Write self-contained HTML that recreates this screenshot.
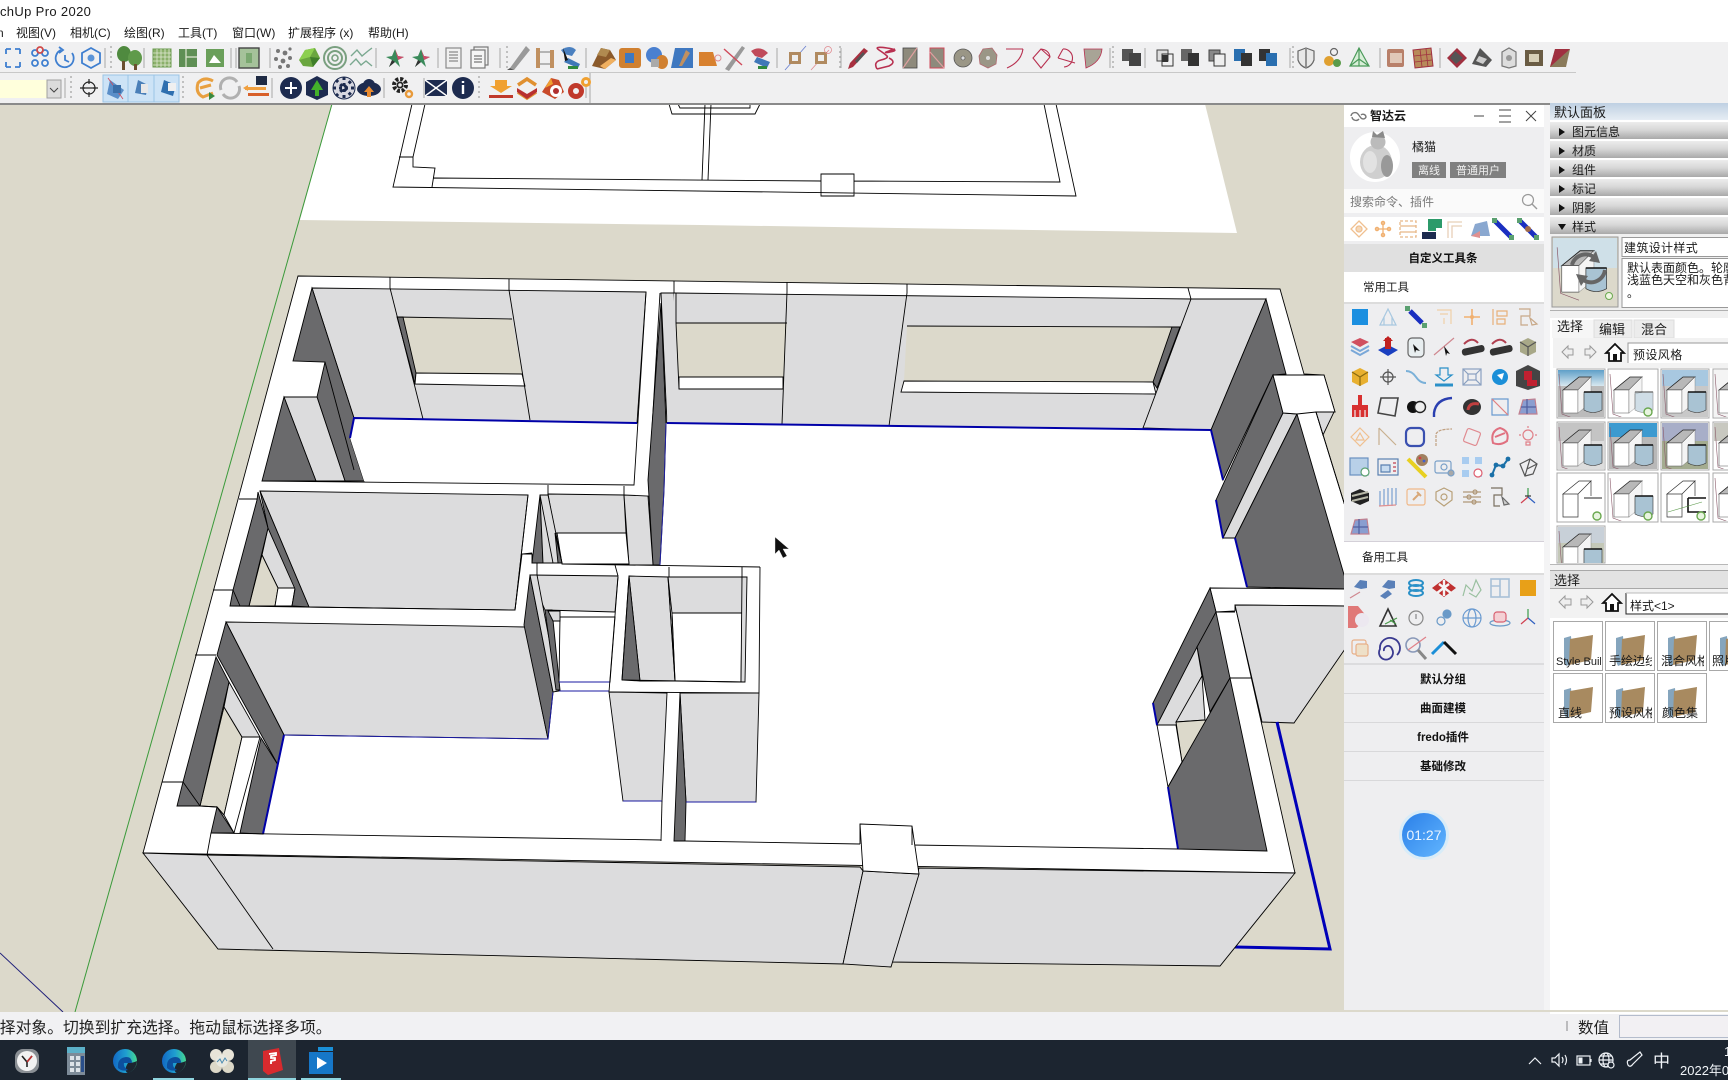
<!DOCTYPE html>
<html><head><meta charset="utf-8"><style>
html,body{margin:0;padding:0;width:1728px;height:1080px;overflow:hidden;background:#dcd9cb}
svg{display:block}
text{font-family:"Liberation Sans","Noto Sans CJK SC",sans-serif;fill:#1a1a1a}
.g{fill:#dcdcdd;stroke:#000;stroke-width:.9}
.d{fill:#6a6a6c;stroke:#000;stroke-width:.9}
.w{fill:#fff;stroke:#000;stroke-width:.9}
.y{fill:#dcd9cb;stroke:#000;stroke-width:.9}
.yn{fill:#dcd9cb;stroke:none}
.l{fill:none;stroke:#000;stroke-width:.9}
.bl{fill:none;stroke:#0000a8;stroke-width:2}
.s{fill:none;stroke-width:1.4}
.t12{font-size:12px}.t13{font-size:13px}
.b{font-weight:bold;font-size:11.5px;text-anchor:middle;fill:#111}
.sep{stroke:#a8a8a8;stroke-width:1}
.dots{stroke:#b0b0b0;stroke-width:1.5;stroke-dasharray:2 3}
</style></head><body>
<svg width="1728" height="1080" viewBox="0 0 1728 1080" xmlns="http://www.w3.org/2000/svg">
<defs>
<linearGradient id="hd" x1="0" y1="0" x2="0" y2="1"><stop offset="0" stop-color="#ececec"/><stop offset=".45" stop-color="#d8d8d8"/><stop offset="1" stop-color="#a9a9a9"/></linearGradient>
<linearGradient id="hb" x1="0" y1="0" x2="0" y2="1"><stop offset="0" stop-color="#bfd0e2"/><stop offset="1" stop-color="#e6edf4"/></linearGradient>
<linearGradient id="cl" x1="0" y1="0" x2="1" y2="1"><stop offset="0" stop-color="#2a7fe8"/><stop offset="1" stop-color="#62b6ff"/></linearGradient>
<linearGradient id="sk" x1="0" y1="0" x2="0" y2="1"><stop offset="0" stop-color="#5f9fc8"/><stop offset="1" stop-color="#d8e8f0"/></linearGradient>
<linearGradient id="ed" x1="0" y1="0" x2="1" y2="0"><stop offset="0" stop-color="#1268c4"/><stop offset=".55" stop-color="#1f9fd0"/><stop offset="1" stop-color="#45d890"/></linearGradient>
<g id="bx"><path d="M5 18 21 5H33L20 18Z" fill="#b8b8b8" stroke="#222" stroke-width=".8"/><path d="M5 18H20V41H5Z" fill="#fff" stroke="#555" stroke-width=".6"/><path d="M20 18 33 5V20L26 22V36L20 41Z" fill="#f4f4f4" stroke="#777" stroke-width=".4"/><path d="M1 2 4 42 20 48" fill="none" stroke="#8a5a6a" stroke-width=".6"/></g>
<g id="cy"><path d="M26 20H44V38Q35 43 26 38Z" fill="#a9c3d3" stroke="#333" stroke-width=".6"/><path d="M26 20H44" stroke="#111" stroke-width="1.4"/></g>
<g id="ck"><circle cx="39" cy="42" r="4" fill="#e8f4e0" stroke="#6aa84f" stroke-width="1.4"/></g>
<g id="fd"><path d="M11 7 18 5 20 32 13 35 11 30Z" fill="#85a5bd"/><path d="M17 8 40 4 38 29 16 34Z" fill="#a88a60"/></g>
</defs>

<rect width="1728" height="1080" fill="#dcd9cb"/>

<!-- upper plan sheet -->
<polygon points="332,104 1205,104 1237,233 700,225 300,220" fill="#fff"/>
<path class="l" d="M412,104 393,187 1076,196 1056,104M425,104 413,157 399,157M413,157 413,167 435,168 432,187M433,178 821,181M854,181 1060,182 1044,104M705,104 702,180M711,104 708,180M821,174H854V196H821ZM669,104 672,114H755L760,104M678,104 680,108H750V104"/>

<!-- axes -->
<path d="M332,104 75,1012" stroke="#3a9a3a" stroke-width="1" fill="none"/>
<path d="M0,953 63,1012" stroke="#20207a" stroke-width="1" fill="none"/>

<!-- footprint -->
<polygon class="w" points="298,276 1280,289 1304,374 1324,375 1335,412 1316,412 1345,506 1345,606 1235,605 1295,873 143,853"/>
<path class="l" d="M1188,288 1191,299M239,499H257M213,590H233M195,655H216M162,782H183M390,277 390,288M509,279 509,290M674,281 674,293M787,282 787,292M907,284 907,293"/>

<!-- back wall room 1 -->
<polygon class="g" points="312,288 646,292 637,423 354,418"/>
<polygon class="yn" points="403,317 512,319 522,374 416,373" />
<polygon class="d" points="397,317 403,317 416,373 415,384"/>
<polygon class="w" points="416,373 522,374 525,386 415,384"/>
<path class="l" d="M390,288 423,419M397,317H403M512,319 397,317M509,290 530,420"/>
<polygon class="d" points="312,288 293,361 325,362 317,397 345,481 364,481 350,438 354,418"/>
<polygon class="g" points="284,397 317,397 345,481 316,481"/>
<polygon class="d" points="284,397 316,481 262,481"/>
<path class="l" d="M325,362 354,470"/>
<polygon fill="#fff" stroke="none" points="354,419 637,424 634,485 364,481 350,438"/>
<path class="l" d="M262,481 634,485 646,292M660,293 649,480"/>
<path class="bl" d="M350,438 354,418 637,423"/>

<!-- dark sliver -->
<polygon class="g" points="661,293 674,293 678,423 667,423"/>
<polygon class="d" points="661,303 648,480 653,565 660,565 664,490 666,423"/>
<path d="M664,490 666,423 M660,565 664,490" stroke="#2020a0" stroke-width="1" fill="none"/>

<!-- back wall main room -->
<polygon fill="#dcdcdd" stroke="none" points="674,293 1191,299 1143,428 667,423"/>
<path class="l" d="M674,293 1191,299"/>
<polygon class="yn" points="676,323 787,323 783,377 679,377"/>
<polygon class="w" points="679,377 783,377 783,389 679,389"/>
<polygon class="yn" points="907,326 1172,327 1153,382 904,381"/>
<polygon class="d" points="1172,327 1180,327 1157,388 1153,382"/>
<polygon class="w" points="904,381 1153,382 1156,394 901,392"/>
<path class="l" d="M676,293 676,323 679,389M787,292 782,424M907,293 889,426M676,323 787,323M907,326 1172,327"/>
<polygon class="g" points="1191,299 1266,299 1211,430 1143,428"/>
<path class="bl" d="M667,423 1211,430"/>

<!-- right walls upper -->
<polygon class="d" points="1266,299 1286,374 1273,375 1223,480 1211,430"/>
<polygon class="d" points="1273,375 1283,413 1223,538 1216,500"/>
<polygon class="g" points="1297,414 1283,413 1223,538 1235,538"/>
<polygon class="d" points="1297,414 1345,578 1345,589 1247,587 1235,538"/>
<polygon class="w" points="1273,375 1324,375 1335,412 1316,412 1297,414 1283,413"/>
<polygon class="g" points="1316,412 1334,412 1323,435"/>
<path class="bl" d="M1211,430 1223,480M1216,500 1223,538M1235,538 1247,587"/>
<path class="l" d="M1316,412 1345,506"/>

<!-- right walls lower -->
<polygon class="w" points="1210,588 1345,589 1345,606 1235,605 1235,611 1216,612"/>
<polygon class="g" points="1235,605 1345,606 1345,649 1294,723 1262,722"/>
<polygon class="d" points="1210,588 1216,612 1157,725 1153,703"/>
<polygon class="d" points="1216,612 1230,678 1210,712 1197,647"/>
<polygon class="g" points="1197,647 1157,725 1176,725 1202,676"/>
<polygon class="g" points="1202,676 1176,722 1205,720"/>
<polygon class="y" points="1176,722 1205,720 1212,724 1182,762"/>
<polygon class="w" points="1157,725 1176,725 1182,762 1168,787"/>
<polygon class="d" points="1230,678 1267,851 1178,849 1168,787"/>
<path class="l" d="M1230,678H1252M1216,612H1235"/>
<path d="M1277,722 1330,949 1235,947" fill="none" stroke="#0000b8" stroke-width="3"/>
<path class="bl" d="M1168,787 1178,849M1153,703 1157,725"/>

<!-- left room 2 -->
<polygon class="g" points="260,491 528,495 515,610 309,607"/>
<polygon class="g" points="268,528 295,588 278,588 262,555"/>
<polygon class="y" points="262,555 278,588 275,606 249,606"/>
<polygon class="w" points="278,588 295,588 292,606 275,606"/>
<polygon class="d" points="258,492 257,500 233,590 230,606 249,606 268,528"/>
<polygon class="d" points="260,491 309,607 292,606 295,589 268,528"/>
<path class="l" d="M233,590 240,606"/>
<path class="l" d="M230,606 515,610 528,495"/>

<!-- left room 3 -->
<polygon class="g" points="226,622 525,627 548,739 284,735"/>
<polygon class="d" points="226,622 284,735 278,765 217,655"/>
<polygon class="y" points="224,707 242,737 224,815 217,807 200,806"/>
<polygon class="g" points="229,682 260,737 242,737 224,707"/>
<polygon class="w" points="242,737 260,737 234,833 224,815"/>
<polygon class="d" points="216,657 183,782 177,806 200,806 229,682"/>
<polygon class="d" points="261,738 278,765 263,834 240,833"/>
<polygon class="d" points="217,807 234,833 211,833"/>
<path class="l" d="M183,782 200,806M224,815 217,807 200,806"/>
<polygon class="d" points="530,575 524,625 548,739 553,692"/>
<path class="bl" d="M284,735 263,834"/>
<path d="M284,735 548,739 553,692" fill="none" stroke="#1818a0" stroke-width="1"/>

<!-- central junction -->
<polygon class="g" points="548,494 624,495 626,533 555,533"/>
<polygon class="g" points="624,495 648,496 653,565 629,565"/>
<polygon fill="#fff" stroke="#000" stroke-width=".9" points="557,533 626,533 629,564 562,564"/>
<polygon class="d" points="540,495 532,563 543,563"/>
<polygon class="g" points="540,495 548,495 562,563 543,563"/>
<polygon class="d" points="555,533 562,563 558,563"/>
<path class="l" d="M540,495 553,563M548,485V495M624,486V496M532,553 522,554 515,610M522,554H532V563H562M562,564 760,567"/>
<path class="l" d="M537,563V575M615,565 618,576M669,567V577M742,567V577M760,567 759,693"/>
<polygon class="g" points="530,575 618,576 615,612 545,610"/>
<polygon class="g" points="537,575 559,691 553,692 530,575"/>
<polygon class="d" points="545,610 552,610 560,690 556,690"/>
<polygon fill="#fff" stroke="#000" stroke-width=".9" points="560,617 615,617 610,682 559,682"/>
<polygon class="g" points="548,611 560,611 560,621 553,621"/>
<path d="M559,682H610M559,691H609" stroke="#1818a0" stroke-width="1" fill="none"/>
<polygon class="g" points="629,576 668,577 675,681 640,681"/>
<polygon class="d" points="629,576 622,680 640,681"/>
<polygon class="g" points="668,577 742,577 742,613 672,613"/>
<polygon fill="#fff" stroke="#000" stroke-width=".9" points="672,613 742,613 741,682 675,681"/>
<polygon class="g" points="742,577 747,577 745,682 741,682"/>
<path class="l" d="M622,680 745,682M672,613 675,681M668,577 675,681"/>
<path class="l" d="M618,577 609,692 759,693M629,576 622,680"/>
<polygon class="g" points="609,692 667,693 662,801 623,801"/>
<polygon class="g" points="680,693 759,693 756,802 686,802"/>
<polygon class="d" points="680,693 674,841 685,841 686,802"/>
<path d="M623,801H662M686,802H756" stroke="#1818a0" stroke-width="1" fill="none"/>
<path class="l" d="M662,801 661,841"/>

<!-- front wall -->
<path class="l" d="M211,833 661,840M685,841 860,844M912,845 1178,849"/>
<polygon class="g" points="143,853 207,855 860,867 863,871 843,964 218,949"/>
<path class="l" d="M207,855 273,949"/>
<polygon class="g" points="919,868 1295,873 1220,966 891,962"/>
<polygon class="g" points="863,871 919,874 891,967 843,964"/>
<polygon class="w" points="860,824 912,826 919,874 863,871"/>
<path class="l" d="M211,833 207,855M860,824 860,844M912,826 912,845"/>

<!-- cursor -->
<path d="M775,537 775,554 779,550 783,558 787,556 783,549 789,549Z" fill="#111" stroke="#eee" stroke-width=".4"/>

<!-- top chrome -->
<rect x="0" y="0" width="1728" height="42" fill="#fff"/>
<rect x="0" y="42" width="1728" height="61" fill="#f0f0f1"/>
<rect x="0" y="72" width="1576" height="1" fill="#c8c8c8"/>
<rect x="0" y="103" width="1728" height="2" fill="#8a8a8a"/>
<text x="-4" y="16" style="font-size:13px;letter-spacing:.35px">tchUp Pro 2020</text>
<g style="font-size:12px">
<text x="-3" y="37">n</text>
<text x="16" y="37">视图(V)</text><text x="70" y="37">相机(C)</text><text x="124" y="37">绘图(R)</text><text x="178" y="37">工具(T)</text><text x="232" y="37">窗口(W)</text><text x="288" y="37">扩展程序 (x)</text><text x="368" y="37">帮助(H)</text>
</g>

<!-- toolbar separators -->
<path class="sep" d="M105 48V68M144 48V68M231 48V68M236 48V68M270 48V68M376 48V68M438 48V68M500 48V68M586 48V68M777 48V68M841 48V68M1110 48V68M1145 48V68M1290 48V68M1380 48V68M1440 48V68M65 78V98M272 78V98M384 78V98M424 78V98M586 78V98M590 73V103"/>
<path class="dots" d="M111 46V70M507 46V70M840 46V70M1113 46V70M1293 46V70M71 76V100M183 76V100M479 76V100"/>

<!-- toolbar row 1 -->
<g transform="translate(0,58)" fill="none" stroke-width="1.8">
<path d="M6-9H11M6-9V-4M20-9H15M20-9V-4M6 9H11M6 9V4M20 9H15M20 9V4" stroke="#3f7fd0"/>
<g transform="translate(40,0)"><circle r="3" cx="-5" cy="-5" stroke="#3f7fd0"/><circle r="3" cx="5" cy="-5" stroke="#3f7fd0"/><circle r="3" cx="-5" cy="5" stroke="#3f7fd0"/><circle r="3" cx="5" cy="5" stroke="#3f7fd0"/><circle r="3" cy="-8" stroke="#d04a4a"/></g>
<g transform="translate(65,0)"><path d="M-4-8A9 9 0 1 0 7-5" stroke="#3f7fd0"/><path d="M0-3V2L4 4" stroke="#3f7fd0"/><path d="M-6-11-2-8-6-5" stroke="#3f7fd0"/></g>
<g transform="translate(91,0)"><path d="M0-10 9-5V5L0 10-9 5V-5Z" stroke="#3f7fd0"/><circle r="3.5" fill="#5b94d8" stroke="none"/></g>
<g transform="translate(129,0)" stroke="none"><ellipse cx="-5" cy="-4" rx="7" ry="8" fill="#4f8a3f"/><ellipse cx="6" cy="0" rx="7" ry="8" fill="#5f9a4a"/><rect x="-7" y="3" width="3" height="9" fill="#6b5030"/><rect x="5" y="6" width="3" height="6" fill="#6b5030"/></g>
<g transform="translate(162,0)"><rect x="-9" y="-9" width="18" height="18" fill="#8bb06a" stroke="#6a9a50" stroke-width="1"/><path d="M-5-9V9M-1-9V9M3-9V9M7-9V9M-9-5H9M-9-1H9M-9 3H9M-9 7H9" stroke="#dfe8d2" stroke-width=".8"/></g>
<g transform="translate(188,0)"><rect x="-9" y="-9" width="18" height="18" fill="#5f8f55"/><path d="M-2-9V9M-2-1H9" stroke="#dfe8d2" stroke-width="1.2"/></g>
<g transform="translate(215,0)"><rect x="-9" y="-9" width="18" height="18" fill="#6a9f5a"/><path d="M-6 5-1-3 6 5Z" fill="#fff" stroke="none"/></g>
<g transform="translate(249,0)"><rect x="-10" y="-10" width="20" height="20" fill="#a5c29a" stroke="#444" stroke-width="1.4"/><rect x="-3" y="-5" width="6" height="10" fill="#7aa870" stroke="none"/></g>
<g transform="translate(283,0)" stroke="none" fill="#777"><circle cx="-5" cy="-7" r="2"/><circle cx="2" cy="-5" r="2.4"/><circle cx="7" cy="-9" r="1.6"/><circle cx="-7" cy="1" r="2"/><circle cx="0" cy="3" r="2.4"/><circle cx="7" cy="0" r="2"/><circle cx="-3" cy="9" r="2"/><circle cx="5" cy="8" r="2"/></g>
<g transform="translate(309,0)" stroke="none"><path d="M-10 2-4-8 6-10 11 0 4 9-6 8Z" fill="#6aa63f"/><path d="M-4-8 6-10 1-1-10 2Z" fill="#8ccf4f"/><path d="M1-1 11 0 4 9Z" fill="#3f7f2a"/></g>
<g transform="translate(335,0)"><circle r="11" stroke="#7aa080" stroke-width="2"/><circle r="7" stroke="#7aa080" stroke-width="2"/><circle r="3" stroke="#7aa080" stroke-width="1.6"/></g>
<g transform="translate(361,0)" stroke="#7aa890" stroke-width="1.4"><path d="M-10-2-4-8 1-2 7-7 11-10M-11 7-5 1 0 7 5 3 11 8"/></g>
<g transform="translate(395,0)" stroke="none"><path d="M0-9 3-2 9-1 3 2 5 9 0 4-6 9-3 2-9-1-3-2Z" fill="#3a8a5a"/><path d="M0-9 3-2 9-1 3 2Z" fill="#d04a6a"/><path d="M-6 9-3 2 0 4Z" fill="#333"/></g>
<g transform="translate(421,0)" stroke="none"><path d="M0-9 3-2 9-1 3 2 5 9 0 4-6 9-3 2-9-1-3-2Z" fill="#3a8a5a"/><path d="M0-9 3-2 9-1 3 2Z" fill="#d04a6a"/><path d="M-6 9-3 2 0 4Z" fill="#333"/></g>
<g transform="translate(454,0)" stroke="#8a8a8a" stroke-width="1.2"><rect x="-8" y="-10" width="15" height="20" fill="#f0f0f0"/><path d="M-5-6H4M-5-3H4M-5 0H4M-5 3H4"/></g>
<g transform="translate(480,0)" stroke="#777" stroke-width="1.2"><rect x="-6" y="-11" width="14" height="18" fill="#f0f0f0"/><rect x="-9" y="-8" width="14" height="18" fill="#f5f5f5"/><path d="M-6-2H2M-6 1H2M-6 4H2"/></g>
<g transform="translate(518,0)" stroke="none"><path d="M-8 10 8-12 12-8-4 12Z" fill="#9a9a9a"/><path d="M-8 10-4 12-11 12Z" fill="#555"/></g>
<g transform="translate(544,0)"><rect x="-8" y="-10" width="4" height="20" fill="#c09060" stroke="none"/><rect x="6" y="-8" width="4" height="18" fill="#c09060" stroke="none"/><path d="M-4-6H6M-4 6H6" stroke="#777" stroke-width="1"/></g>
<g transform="translate(570,0)" stroke="none"><path d="M-9-8Q0-14 6-8L2-2-6-4Z" fill="#4a80c0"/><path d="M-2 0 10 6 8 10-6 4Z" fill="#3f78b8"/><path d="M-7-10-2 2-5 3Z" fill="#111"/><path d="M-2 8H8V11H-2Z" fill="#2f8a3f"/></g>
<g transform="translate(604,0)" stroke="none"><path d="M-12 8-3-10 6-8 12 2 1 11Z" fill="#8b5a2b"/><path d="M-3-10 6-8 2-1-7-3Z" fill="#b08a50"/><path d="M1 11 12 2 7 0-4 8Z" fill="#f0b060"/></g>
<g transform="translate(630,0)" stroke="none"><rect x="-11" y="-10" width="22" height="20" rx="3" fill="#d08030"/><rect x="-5" y="-5" width="9" height="10" fill="#3f78c0"/></g>
<g transform="translate(657,0)" stroke="none"><ellipse cx="-3" cy="-3" rx="8" ry="8" fill="#4a80d0"/><ellipse cx="5" cy="4" rx="6" ry="7" fill="#d08030"/><rect x="-6" y="1" width="8" height="8" fill="#aaa"/></g>
<g transform="translate(682,0)" stroke="none"><path d="M-7-10H11V10H-11Z" fill="#3f78c0"/><path d="M-3 8 4-8 8-5 0 8Z" fill="#c09060"/></g>
<g transform="translate(709,0)" stroke="none"><path d="M-10-6H4L8 8H-10Z" fill="#d8812f"/></g><circle cx="718" cy="0" r="3" stroke="#e08a90" stroke-width="1" fill="none"/>
<g transform="translate(734,0)" stroke="none"><path d="M-9 11 8-12 11-10-5 13Z" fill="#999"/><path d="M-10-9 8 7" stroke="#d04a5a" stroke-width="1.4" fill="none"/></g>
<g transform="translate(760,0)" stroke="none"><path d="M-9-7Q0-13 8-5L2 0-5-2Z" fill="#c04a5a"/><path d="M-3-1 10 4 7 10-6 4Z" fill="#3f78b8"/><rect x="-2" y="8" width="9" height="3" fill="#2f8a3f"/></g>
<g transform="translate(795,0)"><path d="M-10 12 11-12" stroke="#6a80d0" stroke-width=".8"/><rect x="-6" y="-6" width="12" height="12" fill="#b08a60" stroke="none"/><rect x="-3" y="-3" width="6" height="6" fill="#eee" stroke="none"/></g>
<g transform="translate(821,0)"><path d="M-10 12 8-8" stroke="#e08a90" stroke-width=".8"/><rect x="-6" y="-6" width="12" height="12" fill="#b08a60" stroke="none"/><rect x="-3" y="-3" width="6" height="6" fill="#eee" stroke="none"/><circle cx="7" cy="-8" r="3.5" stroke="#e08a90" stroke-width=".8"/></g>
<g transform="translate(858,0)" stroke="none"><path d="M-10 11-8 5 6-10 10-7-5 9Z" fill="#a83040"/><path d="M-3 3 5-6 7-4-1 5Z" fill="#555"/></g>
<path transform="translate(885,0)" d="M-8 11Q-12 4-4 2T2-2-6-8 2-10 5-6 10-9M-8 11 4 8Q12 4 4 0" stroke="#b83050" stroke-width="1.6"/>
<g transform="translate(910,0)"><rect x="-7" y="-10" width="14" height="20" fill="#8e8a7c" stroke="#444" stroke-width=".8"/><path d="M-7 10 7-10" stroke="#e0a0a0" stroke-width="1.2"/></g>
<g transform="translate(937,0)"><rect x="-7" y="-10" width="14" height="20" fill="#8e8a7c" stroke="#d04a5a" stroke-width="1"/><path d="M-7-6 7 10" stroke="#e0a0a0" stroke-width="1.2"/></g>
<g transform="translate(963,0)"><circle r="9" fill="#9a9686" stroke="#555" stroke-width=".8"/><circle r="2" fill="#ddd" stroke="#555" stroke-width=".6"/></g>
<g transform="translate(988,0)"><path d="M-9-2-5-9 4-10 9-3 8 6 0 10-8 6Z" fill="#9a9686" stroke="#b06a70" stroke-width=".8"/><circle r="2" fill="#ddd" stroke="none"/></g>
<path transform="translate(1015,0)" d="M-9-9H8M8-9Q6 4-8 10" stroke="#b83050" stroke-width="1.1"/>
<path transform="translate(1041,0)" d="M-8 0 0-9Q8-8 9-1L0 10ZM0-9 9-1" stroke="#b83050" stroke-width="1.1"/>
<g transform="translate(1067,0)" stroke="#b83050" stroke-width="1.1"><path d="M-4-9A9 9 0 1 1-3 9M-9 0 8 5M-4-9-9 0"/></g>
<g transform="translate(1093,0)"><path d="M-9-9H9Q8 4-7 10Z" fill="#a8a496" stroke="#b83050" stroke-width=".8"/></g>
<g transform="translate(1131,0)" stroke="none"><rect x="-9" y="-9" width="11" height="12" fill="#555"/><rect x="-2" y="-5" width="12" height="13" fill="#444"/></g>
<g transform="translate(1165,0)"><rect x="-8" y="-8" width="11" height="11" stroke="#444" stroke-width="1" fill="#ddd"/><rect x="-3" y="-4" width="11" height="12" stroke="#333" stroke-width="1"/><rect x="-3" y="-3" width="6" height="7" fill="#333" stroke="none"/></g>
<g transform="translate(1190,0)" stroke="none"><rect x="-9" y="-9" width="11" height="12" fill="#666"/><rect x="-2" y="-5" width="11" height="13" fill="#333"/></g>
<g transform="translate(1217,0)"><rect x="-8" y="-8" width="11" height="11" stroke="#444" stroke-width="1" fill="#888"/><rect x="-3" y="-4" width="11" height="12" stroke="#333" stroke-width="1" fill="#eee"/></g>
<g transform="translate(1243,0)" stroke="none"><rect x="-9" y="-9" width="11" height="12" fill="#2a6fb0"/><rect x="-2" y="-5" width="11" height="13" fill="#333"/></g>
<g transform="translate(1268,0)" stroke="none"><rect x="-9" y="-9" width="11" height="12" fill="#333"/><rect x="-2" y="-5" width="11" height="13" fill="#2a6fb0"/></g>
<g transform="translate(1306,0)"><path d="M0-10 8-7V2Q6 8 0 10-6 8-8 2V-7Z" fill="#e8e8e8" stroke="#666" stroke-width="1.2"/><path d="M0-10V10" stroke="#888"/></g>
<g transform="translate(1332,0)" stroke="none"><circle cx="-3" cy="3" r="5" fill="#e0a030"/><circle cx="5" cy="5" r="4" fill="#5a9a4a"/><circle cx="2" cy="-6" r="3.5" stroke="#666" stroke-width="1.2" fill="none"/></g>
<g transform="translate(1359,0)" stroke="#4a9a5a" stroke-width="1.2"><path d="M-9 8 0-10 10 8Z" fill="#d8eed8"/><path d="M0-10V8M-9 8 0 1 10 8"/></g>
<g transform="translate(1396,0)" stroke="none"><rect x="-9" y="-9" width="17" height="18" rx="2" fill="#b8806a"/><path d="M-6-5H6V5H-6Z" fill="#e0c8b8"/></g>
<g transform="translate(1423,0)"><path d="M-10-8 8-10 10 8-8 10Z" fill="#b88a5a" stroke="#a03040" stroke-width="1"/><path d="M-9-2 9-4M-8 4 9 2M-3-9-1 9M3-9 5 9" stroke="#a03040" stroke-width=".8"/></g>
<g transform="translate(1457,0)" stroke="none"><path d="M0-10 10 0 0 10-10 0Z" fill="#a03040"/><path d="M-2-7 6 0-1 6-7 0Z" fill="#555"/></g>
<g transform="translate(1482,0)" stroke="none"><path d="M-10 6-2-10 10 2 4 9Z" fill="#555"/><path d="M-3-2 5 1 1 6-6 3Z" fill="#ccc"/></g>
<g transform="translate(1509,0)"><path d="M-7-6 0-10 7-6V8L0 10-7 8Z" fill="#ddd" stroke="#777" stroke-width="1.2"/><circle r="3" fill="#999" stroke="none"/></g>
<g transform="translate(1534,0)" stroke="none"><rect x="-9" y="-8" width="18" height="16" fill="#6a5c44"/><path d="M-5-4H5V4H-5Z" fill="#d8d0b8"/></g>
<g transform="translate(1560,0)" stroke="none"><path d="M-10 9-5-9 10-9 6 9Z" fill="#8a7a5a"/><path d="M-5-9 10-9-10 9Z" fill="#a03040"/></g>
</g>

<!-- toolbar row 2 -->
<rect x="0" y="80" width="47" height="18" fill="#ffffdc"/>
<rect x="47" y="80" width="14" height="18" fill="#dcdcdc" stroke="#a0a0a0" stroke-width="1"/>
<path d="M50 88 54 92 58 88" fill="none" stroke="#444" stroke-width="1"/>
<rect x="103" y="75" width="76" height="27" fill="#cde3f6" stroke="#9ac4e6" stroke-width="1"/>
<path d="M128 75V102M154 75V102" stroke="#9ac4e6" stroke-width="1"/>
<g transform="translate(0,88)" fill="none">
<g transform="translate(89,0)"><path d="M-9 0H-4M4 0H9M0-9V-4M0 4V9" stroke="#222" stroke-width="1.2"/><circle r="6" stroke="#222" stroke-width="1.2"/><path d="M-6 0H6" stroke="#222" stroke-width="1.2"/></g>
<g transform="translate(116,0)" stroke="none"><path d="M-6-8 8 2 2 11-9 6Z" fill="#5a8ec8"/><path d="M-8-10 7 11" stroke="#d04a5a" stroke-width=".8" fill="none"/><rect x="-3" y="-3" width="8" height="8" fill="#3a6ea8"/></g>
<g transform="translate(142,0)" stroke="none"><path d="M-4-8 6-3 4 7-7 5Z" fill="#4a7fb8"/><rect x="-1" y="-4" width="7" height="9" fill="#e8e8e8"/></g>
<g transform="translate(169,0)" stroke="none"><path d="M-5-8 7-3 4 8-8 4Z" fill="#2f6faf"/><rect x="-1" y="-5" width="8" height="8" fill="#f0f0f0"/></g>
<g transform="translate(205,0)" stroke-width="3"><path d="M8-7Q-1-12-7-5-10 5-2 9L8 5" stroke="#e8a040"/><path d="M-5 0 6-3" stroke="#e8a040"/><path d="M4 4 10 8 4 12Z" fill="#3a8a3f" stroke="none"/></g>
<g transform="translate(230,0)" stroke="#b0b0b0" stroke-width="3"><path d="M-9 2A9 9 0 0 1 7-6M9-2A9 9 0 0 1-7 6"/></g>
<g transform="translate(257,0)" stroke="none"><rect x="-1" y="-12" width="11" height="9" fill="#1e2a44"/><rect x="-12" y="-1" width="21" height="3" fill="#f0a040"/><rect x="-9" y="5" width="21" height="3" fill="#d8602a"/><path d="M-12-3-17 0-12 3Z" fill="#f0a040" transform="translate(3,0)"/></g>
<g transform="translate(291,0)"><circle r="11" fill="#1d2b4f" stroke="none"/><path d="M-6 0H6M0-6V6" stroke="#fff" stroke-width="2"/></g>
<g transform="translate(317,0)" stroke="none"><path d="M0-12 11-6V7L0 12-11 7V-6Z" fill="#1d2b4f"/><path d="M0-8 6 2H2V8H-2V2H-6Z" fill="#43b02a"/></g>
<g transform="translate(344,0)"><circle r="11" fill="#d8d8e0" stroke="#1d2b4f" stroke-width="1"/><path d="M-11 0H11M0-11V11M-8-8 8 8M-8 8 8-8" stroke="#1d2b4f" stroke-width="3" stroke-dasharray="3 3"/></g>
<g transform="translate(369,0)" stroke="none"><ellipse cx="0" cy="1" rx="12" ry="7" fill="#1d2b4f"/><circle cx="0" cy="-3" r="6" fill="#1d2b4f"/><path d="M0-2 5 4H2V9H-2V4H-5Z" fill="#e88a30"/></g>
<g transform="translate(402,0)"><circle cx="-2" cy="-3" r="6" stroke="#222" stroke-width="4" stroke-dasharray="3 1.700"/><circle cx="-2" cy="-3" r="3.5" fill="#222" stroke="none"/><circle cx="-2" cy="-3" r="1.800" fill="#f0f0f1" stroke="none"/><circle cx="7" cy="6" r="3" stroke="#e89a3a" stroke-width="2.4"/></g>
<g transform="translate(436,0)"><rect x="-11" y="-8" width="22" height="16" fill="#1d2b4f" stroke="none"/><path d="M-11-8 11 8M-11 8 11-8" stroke="#fff" stroke-width="1.4"/></g>
<g transform="translate(463,0)"><circle r="11" fill="#1d2b4f" stroke="none"/><path d="M0-3V6M0-7V-5" stroke="#fff" stroke-width="2.4"/></g>
<g transform="translate(501,0)" stroke="none"><path d="M-6-8H6V-2H11L0 5-11-2H-6Z" fill="#f0a030"/><rect x="-12" y="7" width="24" height="3" fill="#c0392b"/></g>
<g transform="translate(527,0)"><path d="M-9-3 0-9 9-3M-9 4 0 10 9 4" stroke="#e09030" stroke-width="3.5"/><path d="M-10 4 0 11 10 4 10 0 0 6-10 0Z" fill="#b83030" stroke="none"/></g>
<g transform="translate(553,0)" stroke="none"><path d="M-11 4-2-10 6-8 11 4 2 11Z" fill="#c84a2a"/><circle cx="3" cy="3" r="6" fill="#fff"/><circle cx="3" cy="3" r="3" fill="#b03030"/><path d="M-8 0-2-10 0-4Z" fill="#f0a030"/></g>
<g transform="translate(579,0)" stroke="none"><circle cx="-3" cy="3" r="8" fill="#c0392b"/><circle cx="-3" cy="3" r="3" fill="#f0f0f1"/><circle cx="7" cy="-6" r="5" fill="#f0a030"/><circle cx="7" cy="-6" r="2" fill="#f0f0f1"/></g>
</g>

<!-- panel 1 -->
<rect x="1344" y="105" width="206" height="905" fill="#f4f4f5"/>
<rect x="1344" y="105" width="200" height="905" fill="#eeeef0"/>
<rect x="1344" y="105" width="200" height="22" fill="#fff"/>
<path d="M1351 116a4 4 0 0 1 7-2l3 4a3 3 0 0 0 5-1 3 3 0 0 0-5-2M1359 119a4 4 0 0 1-7-2" fill="none" stroke="#777" stroke-width="1.4"/>
<text x="1370" y="120" style="font-size:12px;font-weight:bold">智达云</text>
<path d="M1474 116H1484M1499 110H1511M1499 116H1511M1499 122H1511M1526 111 1536 121M1536 111 1526 121" stroke="#444" stroke-width="1" fill="none"/>
<circle cx="1375" cy="157" r="25" fill="#fff"/>
<ellipse cx="1376" cy="162" rx="16" ry="17" fill="#cfcfcf"/><circle cx="1378" cy="142" r="7.500" fill="#bbb"/><ellipse cx="1387" cy="166" rx="6" ry="11" fill="#999"/><ellipse cx="1370" cy="162" rx="7" ry="11" fill="#e2e2e2"/><path d="M1372 137 1373 131 1377 135 1383 131 1385 138Z" fill="#8a8a8a"/>
<text x="1412" y="151" style="font-size:12px">橘猫</text>
<rect x="1412" y="162" width="34" height="16" fill="#808080"/><text x="1429" y="174" text-anchor="middle" style="font-size:11px;fill:#f0f0f0">离线</text>
<rect x="1450" y="162" width="56" height="16" fill="#808080"/><text x="1478" y="174" text-anchor="middle" style="font-size:11px;fill:#f0f0f0">普通用户</text>
<rect x="1344" y="189" width="200" height="24" fill="#fafafa"/>
<text x="1350" y="206" style="font-size:12px;fill:#7a7a7a">搜索命令、插件</text>
<circle cx="1528" cy="200" r="5.5" fill="none" stroke="#999" stroke-width="1.2"/><path d="M1532 204 1537 209" stroke="#999" stroke-width="1.4"/>
<rect x="1344" y="217" width="200" height="24" fill="#fff"/>
<!-- quick icons -->
<g transform="translate(0,229)" fill="none" stroke-width="1.3">
<g transform="translate(1359,0)" stroke="#f0c090"><path d="M0-8 8 0 0 8-8 0Z"/><circle r="3" fill="#f6d8b8"/></g>
<g transform="translate(1383,0)" stroke="#f0b070"><path d="M-7 0H7M0-7V7"/><circle cx="-6" r="1.6"/><circle cx="6" r="1.6"/><circle cy="-6" r="1.6"/><circle cy="6" r="1.6"/></g>
<g transform="translate(1408,0)" stroke="#e8b888"><rect x="-8" y="-8" width="16" height="16" stroke-dasharray="3 2"/><path d="M-8-3H8M-8 3H8"/></g>
<g transform="translate(1432,0)" stroke="none"><path d="M-4-10H10V-1H4V2H-4Z" fill="#2c9a6a"/><path d="M-10 3H4V2 10H-10Z" fill="#1d2b4f"/></g>
<path transform="translate(1455,0)" d="M-7 9V-7H7M-3 9V-3H7" stroke="#e8d0b8"/>
<g transform="translate(1480,0)" stroke="none"><path d="M-9 7-5-5 7-8 10 7Z" fill="#8aa8d0"/><path d="M-9 7 0 2 0 9Z" fill="#e09090"/></g>
<g transform="translate(1503,0)"><path d="M-8-8 8 8" stroke="#1a2fc0" stroke-width="5"/><rect x="-11" y="-11" width="5" height="5" fill="#5aa070" stroke="none"/><rect x="6" y="6" width="5" height="5" fill="#5aa070" stroke="none"/></g>
<g transform="translate(1528,0)"><path d="M-8-8 8 8" stroke="#1a2fc0" stroke-width="5"/><circle r="3" fill="#a06a4a" stroke="none"/><rect x="-11" y="-11" width="5" height="5" fill="#5aa070" stroke="none"/><rect x="6" y="6" width="5" height="5" fill="#5aa070" stroke="none"/></g>
</g>
<rect x="1344" y="244" width="200" height="28" fill="#e0e0e0"/><text x="1443" y="262" class="b">自定义工具条</text>
<rect x="1344" y="272" width="200" height="30" fill="#fff"/><rect x="1344" y="302" width="200" height="2" fill="#dcdcdc"/>
<text x="1363" y="291" style="font-size:11.5px">常用工具</text>

<!-- spare tools band -->
<rect x="1344" y="541" width="200" height="1" fill="#d4d0d8"/>
<rect x="1344" y="542" width="200" height="31" fill="#fff"/><rect x="1344" y="573" width="200" height="2" fill="#dcdcdc"/>
<text x="1362" y="561" style="font-size:11.5px">备用工具</text>

<!-- grid 1 -->
<g fill="none" stroke-width="1.2">
<rect x="1352" y="309" width="16" height="16" fill="#1b8fe0"/>
<path d="M1380 325 1388 309 1396 325ZM1384 317V325M1392 317V325" stroke="#a8c8e0"/>
<path d="M1410 311 1422 323" stroke="#1a2fc0" stroke-width="5"/><rect x="1405" y="306" width="5" height="5" fill="#5aa070"/><rect x="1422" y="323" width="5" height="5" fill="#5aa070"/>
<path d="M1437 310H1451V324M1440 314H1448M1444 318V324" stroke="#f0d0a8"/>
<path d="M1464 317H1480M1472 309V325" stroke="#f0b070" stroke-width="1.6"/><circle cx="1472" cy="317" r="2" fill="#f0b070"/>
<path d="M1493 309V325M1497 311H1507V316H1497ZM1497 319H1505V324H1497Z" stroke="#e8b078"/>
<path d="M1519 309H1530V316H1521V325H1528M1530 318 1537 324 1532 325Z" stroke="#c8a888"/>

<g transform="translate(1360,347)"><path d="M0-9 9-5 0 0-9-5Z" fill="#d05060"/><path d="M-9-1 0 4 9-1M-9 3 0 8 9 3" stroke="#7aa8d8" stroke-width="2"/></g>
<g transform="translate(1388,347)"><path d="M-10 3 0-2 10 3 0 9Z" fill="#1a3fc0"/><path d="M-3-9H3V2H-3Z" fill="#c02020"/><path d="M-5-6 0-11 5-6Z" fill="#c02020"/></g>
<g transform="translate(1416,347)"><rect x="-8" y="-9" width="16" height="19" rx="4" fill="#e8eef0" stroke="#666"/><path d="M-3-3 4 4 0 3-1 6Z" fill="#111"/></g>
<g transform="translate(1444,347)"><path d="M-10 8 10-9" stroke="#d08890"/><path d="M0-1 6 7 3 6 2 9Z" fill="#111"/></g>
<g transform="translate(1472,347)"><rect x="-11" y="0" width="23" height="7" rx="3" fill="#333" transform="rotate(-12)"/><path d="M-8-3Q0-11 6-4" stroke="#b04050" stroke-width="2"/></g>
<g transform="translate(1500,347)"><rect x="-11" y="0" width="23" height="7" rx="3" fill="#333" transform="rotate(-12)"/><path d="M-8-3Q0-11 6-4" stroke="#b04050" stroke-width="2"/></g>
<g transform="translate(1528,347)"><path d="M0-9 8-5 8 5 0 9-8 5-8-5Z" fill="#a8a888"/><path d="M0 0 8-5M0 0-8-5M0 0V9" stroke="#555"/></g>

<g transform="translate(1360,377)"><path d="M0-9 8-5 8 5 0 9-8 5-8-5Z" fill="#e8b030"/><path d="M0 0 8-5M0 0-8-5M0 0V9" stroke="#8a6a10"/></g>
<g transform="translate(1388,377)"><circle r="5" stroke="#555"/><path d="M-8 0H8M0-8V8" stroke="#555"/></g>
<path transform="translate(1416,377)" d="M-10-6Q-4-6 0 0T10 6" stroke="#7ab0d8" stroke-width="2"/>
<g transform="translate(1444,377)" stroke="#2a90c8"><path d="M-4-9H4V-2H8L0 4-8-2H-4Z"/><path d="M-9 8H9" stroke-width="3"/></g>
<g transform="translate(1472,377)" stroke="#8aa0c0"><rect x="-9" y="-8" width="18" height="16"/><rect x="-4" y="-3" width="8" height="6"/><path d="M-9-8-4-3M9-8 4-3M-9 8-4 3M9 8 4 3"/></g>
<g transform="translate(1500,377)"><circle r="8" fill="#1b8fd8"/><path d="M-3-2 4-4 2 3Z" fill="#fff"/></g>
<g transform="translate(1528,377)"><path d="M0-12 12-6V9L0 13-12 9V-6Z" fill="#444"/><path d="M-4-6H4V3H9V9H-1V3H-4Z" fill="#c02030"/></g>

<g transform="translate(1360,407)"><path d="M-2-12H2V-2H8V10H-8V-2H-2Z" fill="#d83030"/><path d="M-5 3V10M0 3V10M5 3V10" stroke="#f0f0f0"/></g>
<path transform="translate(1388,407)" d="M-7-9H10L7 9-10 6Z" stroke="#444" stroke-width="1.6"/>
<g transform="translate(1416,407)"><circle cx="-3" r="6" fill="#111"/><circle cx="4" r="5.5" fill="#eee" stroke="#222" stroke-width="1.4"/></g>
<path transform="translate(1444,407)" d="M-10 10V6Q-8-8 8-9" stroke="#2a3fb0" stroke-width="2.4"/>
<g transform="translate(1472,407)"><ellipse rx="9" ry="8" fill="#333"/><path d="M-4 3Q-3-5 7-3" stroke="#c04040" stroke-width="3"/></g>
<g transform="translate(1500,407)"><path d="M-8-8H8V8H-8Z" stroke="#6a9ad0"/><path d="M-8-8 8 8" stroke="#e08080"/></g>
<g transform="translate(1528,407)"><path d="M-9 7-5-7 7-8 9 7Z" fill="#8a9ed0" stroke="#c08090"/><path d="M-7 0H8M-1-8V7" stroke="#5060a0"/></g>

<g transform="translate(1360,437)" stroke="#f0c090"><path d="M0-9 9 0 0 9-9 0Z"/><path d="M0-4 4 3H-4Z"/></g>
<path transform="translate(1388,437)" d="M-9-9V8M-9-9 8 8" stroke="#c8b090"/>
<rect x="1406" y="428" width="18" height="18" rx="5" stroke="#3a50b0" stroke-width="2.2"/>
<path transform="translate(1444,437)" d="M-8 9V-3Q-6-8 8-8" stroke="#c0a080" stroke-dasharray="3 1"/>
<g transform="translate(1472,437)" stroke="#e08a90"><rect x="-7" y="-7" width="14" height="14" rx="2" transform="rotate(20)"/></g>
<g transform="translate(1500,437)" stroke="#e07080"><path d="M-7 6Q-10-6 0-9 10-6 7 4 0 9-7 6ZM-5 0 5-4" stroke-width="2"/></g>
<g transform="translate(1528,437)" stroke="#e08088"><circle cy="-2" r="5"/><path d="M-2 5H2V8H-2ZM0-11V-9M-9-2H-7M7-2H9"/></g>

<g transform="translate(1360,467)"><rect x="-10" y="-9" width="18" height="17" fill="#b8d0e8" stroke="#6a90c0"/><circle cx="5" cy="5" r="4" fill="#fff" stroke="#5aa070"/></g>
<g transform="translate(1388,467)" stroke="#5a80b0"><rect x="-10" y="-8" width="20" height="16"/><path d="M-7-2H2V5H-7Z" fill="#c8dcf0"/><path d="M5-4H8M5 0H8M5 4H8" stroke="#c04050"/></g>
<g transform="translate(1416,467)"><path d="M-8-8 10 10" stroke="#e8d020" stroke-width="4"/><circle cx="6" cy="-7" r="6" fill="#a08060"/><circle cx="4" cy="-9" r="1.4" fill="#d04040"/><circle cx="8" cy="-6" r="1.4" fill="#4060d0"/></g>
<g transform="translate(1444,467)" stroke="#7aa0c8"><rect x="-9" y="-6" width="16" height="12" rx="2"/><circle r="3"/><circle cx="7" cy="6" r="3" fill="#a8a8a8"/></g>
<g transform="translate(1472,467)"><rect x="-10" y="-10" width="20" height="20" fill="#a8ccf0"/><path d="M-3-10H3V-3H10V3H3V10H-3V3H-10V-3H-3Z" fill="#e8eef4"/><circle cx="6" cy="6" r="4" fill="#fff" stroke="#e06070"/></g>
<g transform="translate(1500,467)"><path d="M-8 8-4-2 3-1 8-8" stroke="#1a70a8" stroke-width="2"/><circle cx="-8" cy="8" r="2.4" fill="#1a70a8"/><circle cx="-4" cy="-2" r="2.4" fill="#1a70a8"/><circle cx="3" cy="-1" r="2.4" fill="#1a70a8"/><circle cx="8" cy="-8" r="2.4" fill="#1a70a8"/></g>
<path transform="translate(1528,467)" d="M-8-3 2-8 9-3 5 7-3 9ZM2-8-1 2 9-3M-1 2-3 9" stroke="#555"/>

<g transform="translate(1360,497)"><path d="M0-8 9-4V4L0 8-9 4V-4Z" fill="#222"/><path d="M-8-1 8-5M-8 4 8 0" stroke="#b8b8a8" stroke-width="2"/></g>
<g transform="translate(1388,497)" stroke="#7aa0d0"><path d="M-8-6V9M-4-8V9M0-9V9M4-9V9M8-9V8"/><path d="M-9 9 8 8" stroke="#e09090"/></g>
<g transform="translate(1416,497)" stroke="#f0b888"><rect x="-9" y="-8" width="18" height="16" rx="2"/><path d="M-3 3 3-3M1-5 5-1" stroke="#d8a878" stroke-width="2"/></g>
<g transform="translate(1444,497)" stroke="#b8a078"><path d="M0-9 8-5V3L0 9-8 3V-5Z"/><circle r="3"/></g>
<g transform="translate(1472,497)" stroke="#b09878"><path d="M-9-5H9M-9 0H9M-9 5H9"/><circle cx="3" cy="-5" r="2"/><circle cx="-3" r="2"/><circle cx="2" cy="5" r="2"/></g>
<g transform="translate(1500,497)" stroke="#7a7060"><path d="M-9-9H2V-2H-6V9H0"/><path d="M2 0 9 7 4 8Z" stroke="#6a6a6a" fill="#ccc"/></g>
<g transform="translate(1528,497)"><path d="M0 0V-9" stroke="#3a9a4a"/><path d="M0 0-7 6" stroke="#d04050"/><path d="M0 0 7 6" stroke="#3060c0"/><path d="M-3-1H3" stroke="#333"/></g>
<g transform="translate(1360,527)"><path d="M-9 7-5-7 7-8 9 7Z" fill="#8a9ed0" stroke="#c08090"/><path d="M-7 0H8M-1-8V7" stroke="#5060a0"/></g>

<!-- grid 2 -->
<g transform="translate(1360,588)"><path d="M-6-1 0-8 7-7 7 0 1 1Z" fill="#5a80b8"/><path d="M-10 10 0 4" stroke="#d08890"/></g>
<g transform="translate(1388,588)"><path d="M-6-1 0-8 7-7 7 0 1 1Z" fill="#5a80b8"/><path d="M-8 8 0 2 4 6-3 11Z" fill="#5a80b8"/></g>
<g transform="translate(1416,588)" stroke="#2a90c8" stroke-width="2"><ellipse cy="-5" rx="7" ry="3"/><ellipse rx="7" ry="3"/><ellipse cy="5" rx="7" ry="3"/></g>
<g transform="translate(1444,588)"><path d="M-12 0 0-9 12 0 0 9Z" fill="#c03030"/><path d="M-5-4 7 5M5-4-7 5M0-8V8" stroke="#f4f4f4" stroke-width="2.4"/></g>
<path transform="translate(1472,588)" d="M-9 8-6-3 0 3 4-8 9 2 4 9-3 5" stroke="#9ac0a0"/>
<g transform="translate(1500,588)" stroke="#a8c0d8" stroke-width="1.6"><rect x="-9" y="-9" width="18" height="18"/><path d="M0-9V9M-9-2H0"/></g>
<g transform="translate(1528,588)"><rect x="-8" y="-8" width="16" height="16" fill="#e8a018"/></g>
<g transform="translate(1360,618)"><path d="M-12-12H-2L8 0-4 10-12 10Z" fill="#e07878"/><circle cx="2" cy="2" r="7" fill="#ece8f0"/></g>
<g transform="translate(1388,618)"><path d="M-8 8 0-9 8 8Z" stroke="#333" stroke-width="1.6"/><path d="M-3 6 9 0M2 2 8 6" stroke="#4a9a4a"/></g>
<g transform="translate(1416,618)"><circle r="7" stroke="#888"/><path d="M0-4V1" stroke="#888"/></g>
<g transform="translate(1444,618)" stroke="#6a9ac8"><circle cx="3" cy="-4" r="4" fill="#6a9ac8"/><circle cx="-3" cy="3" r="4"/></g>
<g transform="translate(1472,618)" stroke="#6a9ad0"><circle r="9"/><ellipse rx="4" ry="9"/><path d="M-9 0H9"/></g>
<g transform="translate(1500,618)"><ellipse cy="5" rx="10" ry="3" stroke="#6a9ac8"/><rect x="-6" y="-6" width="12" height="10" rx="3" fill="#f4d0d4" stroke="#d86070"/></g>
<g transform="translate(1528,618)"><path d="M0 0V-9" stroke="#3a9a4a"/><path d="M0 0-7 6" stroke="#d04050"/><path d="M0 0 7 6" stroke="#3060c0"/></g>
<g transform="translate(1360,648)" stroke="#e8b088"><rect x="-8" y="-8" width="14" height="14" rx="2"/><rect x="-4" y="-4" width="12" height="12" rx="2" fill="#eee0c8"/></g>
<path transform="translate(1388,648)" d="M-4 3A4 4 0 1 1 4 1 7 7 0 1 1-8 1 10 10 0 1 1 9 7" stroke="#3a3a90" stroke-width="1.8"/>
<g transform="translate(1416,648)"><circle cx="-3" cy="-3" r="7" stroke="#8898b8" stroke-width="1.6"/><path d="M2 2 10 11" stroke="#888" stroke-width="3"/><path d="M-8 2 10-11" stroke="#e08088"/></g>
<g transform="translate(1444,648)"><path d="M-12 6 0-6" stroke="#1b8fd8" stroke-width="3"/><path d="M0-6 12 6" stroke="#111" stroke-width="3"/></g>
</g>

<path d="M1344 664H1544" stroke="#dcdcde" stroke-width="2"/>
<path d="M1344 693.5H1544M1344 722.5H1544M1344 751.5H1544M1344 780.5H1544" stroke="#d8d8da" stroke-width="1"/>
<text x="1443" y="683" class="b">默认分组</text>
<text x="1443" y="712" class="b">曲面建模</text>
<text x="1443" y="741" class="b">fredo插件</text>
<text x="1443" y="770" class="b">基础修改</text>
<circle cx="1424" cy="835" r="25" fill="#d8ecf8"/>
<circle cx="1424" cy="835" r="22" fill="url(#cl)"/>
<text x="1424" y="840" text-anchor="middle" style="font-size:14px;fill:#e8f4ff">01:27</text>

<!-- panel 2 -->
<rect x="1550" y="105" width="178" height="905" fill="#fff"/>
<rect x="1550" y="103" width="178" height="17" fill="url(#hb)"/>
<text x="1554" y="117" class="t13">默认面板</text>
<g>
<rect x="1550" y="122" width="178" height="17" fill="url(#hd)"/><rect x="1550" y="141" width="178" height="17" fill="url(#hd)"/><rect x="1550" y="160" width="178" height="17" fill="url(#hd)"/><rect x="1550" y="179" width="178" height="17" fill="url(#hd)"/><rect x="1550" y="198" width="178" height="17" fill="url(#hd)"/><rect x="1550" y="217" width="178" height="17" fill="url(#hd)"/>
<path d="M1559 128 1565 132 1559 136ZM1559 147 1565 151 1559 155ZM1559 166 1565 170 1559 174ZM1559 185 1565 189 1559 193ZM1559 204 1565 208 1559 212ZM1558 224H1566L1562 230Z" fill="#111"/>
<text x="1572" y="136" class="t12">图元信息</text><text x="1572" y="155" class="t12">材质</text><text x="1572" y="174" class="t12">组件</text><text x="1572" y="193" class="t12">标记</text><text x="1572" y="212" class="t12">阴影</text><text x="1572" y="231" class="t12">样式</text>
</g>
<rect x="1550" y="234" width="178" height="84" fill="#f0f0f0"/>
<rect x="1552" y="237" width="66" height="70" fill="#dcd9cb" stroke="#999"/>
<rect x="1553" y="238" width="64" height="30" fill="#cfe0e8"/>
<g transform="translate(1556,245) scale(1.15)"><use href="#bx"/><use href="#cy"/></g>
<path d="M1572 265a14 14 0 0 1 24-6M1605 270a14 14 0 0 1-24 8" fill="none" stroke="#666" stroke-width="4"/>
<path d="M1596 251 1600 263 1589 261Z M1581 286 1576 274 1588 276Z" fill="#666"/>
<circle cx="1609" cy="296" r="3.5" fill="#eef6e0" stroke="#6aa84f"/>
<rect x="1622" y="237.500" width="110" height="19" fill="#fff" stroke="#999"/>
<text x="1624" y="252" style="font-size:12px;letter-spacing:.35px">建筑设计样式</text>
<rect x="1622" y="258.500" width="110" height="49" fill="#fff" stroke="#999"/>
<text x="1627" y="272" class="t12">默认表面颜色。轮廓线</text>
<text x="1627" y="284" class="t12">浅蓝色天空和灰色背景</text>
<text x="1627" y="297" class="t12">。</text>
<rect x="1550" y="310" width="178" height="1" fill="#b0b0b0"/>
<rect x="1552" y="320" width="42" height="18" fill="#f6f6f6"/>
<rect x="1594" y="320" width="38" height="18" fill="#ececec" stroke="#ddd"/>
<rect x="1634" y="320" width="40" height="18" fill="#ececec" stroke="#ddd"/>
<text x="1557" y="331" class="t13">选择</text><text x="1599" y="334" class="t13">编辑</text><text x="1641" y="334" class="t13">混合</text>
<rect x="1553" y="338" width="175" height="30" fill="#f2f2f2"/>
<path d="M1562 352 1568 346V349H1573V355H1568V358Z M1596 352 1590 346V349H1585V355H1590V358Z" fill="#eee" stroke="#999"/>
<path d="M1606 353 1615 344 1624 353H1621V361H1609V353Z" fill="#fff" stroke="#111" stroke-width="1.8"/><rect x="1613" y="354" width="4" height="7" fill="#111"/>
<rect x="1628" y="343" width="100" height="20" fill="#fff"/><path d="M1628 363V343H1728" fill="none" stroke="#999"/>
<text x="1633" y="359" style="font-size:12px;letter-spacing:.4px">预设风格</text>

<!-- style tiles -->
<g stroke="#a8a8a8" stroke-width="1">
<rect x="1557" y="369" width="48" height="49" fill="#fff"/><rect x="1608" y="369" width="50" height="49" fill="#fff"/><rect x="1661" y="369" width="48" height="49" fill="#fff"/><rect x="1713" y="369" width="20" height="49" fill="#fff"/>
<rect x="1557" y="422" width="48" height="48" fill="#fff"/><rect x="1608" y="422" width="50" height="48" fill="#fff"/><rect x="1661" y="422" width="48" height="48" fill="#fff"/><rect x="1713" y="422" width="20" height="48" fill="#fff"/>
<rect x="1557" y="473" width="48" height="49" fill="#fff"/><rect x="1608" y="473" width="50" height="49" fill="#fff"/><rect x="1661" y="473" width="48" height="49" fill="#fff"/><rect x="1713" y="473" width="20" height="49" fill="#fff"/>
<rect x="1557" y="526" width="48" height="37" fill="#fff"/>
</g>
<g stroke="none">
<rect x="1558" y="370" width="46" height="16" fill="url(#sk)"/><rect x="1558" y="386" width="46" height="31" fill="#bbb"/>
<rect x="1662" y="370" width="46" height="16" fill="#a8c8e0"/><rect x="1662" y="386" width="46" height="31" fill="#c8c8c8"/>
<rect x="1558" y="423" width="46" height="18" fill="#c4c4c4"/><rect x="1558" y="441" width="46" height="28" fill="#ddd"/>
<rect x="1609" y="423" width="48" height="14" fill="#3c9ad0"/><rect x="1609" y="437" width="48" height="32" fill="#b8b8b8"/>
<rect x="1662" y="423" width="46" height="18" fill="#a8aec8"/><rect x="1662" y="441" width="46" height="28" fill="#a4ac90"/>
<rect x="1714" y="423" width="14" height="18" fill="#c8c8c0"/>
<rect x="1558" y="527" width="46" height="16" fill="#c8d0d8"/><rect x="1558" y="543" width="46" height="20" fill="#c4c8b8"/>
<rect x="1714" y="370" width="14" height="47" fill="#f4f4f4"/>
</g>
<svg x="1558" y="370" width="46" height="47" viewBox="0 0 46 47"><use href="#bx" y="2"/><use href="#cy" y="2"/></svg>
<svg x="1609" y="370" width="48" height="47" viewBox="0 0 48 47"><use href="#bx" y="2"/><use href="#cy" y="2" opacity=".55"/><use href="#ck"/></svg>
<svg x="1662" y="370" width="46" height="47" viewBox="0 0 46 47"><use href="#bx" y="2"/><use href="#cy" y="2"/></svg>
<svg x="1714" y="370" width="15" height="47" viewBox="0 0 15 47"><use href="#bx" y="2"/></svg>
<svg x="1558" y="423" width="46" height="46" viewBox="0 0 46 46"><use href="#bx" y="2"/><use href="#cy" y="2"/></svg>
<svg x="1609" y="423" width="48" height="46" viewBox="0 0 48 46"><use href="#bx" y="2"/><use href="#cy" y="2"/></svg>
<svg x="1662" y="423" width="46" height="46" viewBox="0 0 46 46"><use href="#bx" y="2"/><use href="#cy" y="2"/></svg>
<svg x="1714" y="423" width="15" height="46" viewBox="0 0 15 46"><use href="#bx" y="2"/></svg>
<svg x="1558" y="474" width="46" height="47" viewBox="0 0 46 47"><path d="M5 20 21 7H33L20 20ZM5 20H20V43H5ZM20 20 33 7V22" fill="none" stroke="#333" stroke-width=".7"/><path d="M26 24H44" stroke="#222"/><use href="#ck"/></svg>
<svg x="1609" y="474" width="48" height="47" viewBox="0 0 48 47"><use href="#bx" y="2"/><use href="#cy" y="2"/><use href="#ck"/></svg>
<svg x="1662" y="474" width="46" height="47" viewBox="0 0 46 47"><path d="M5 20 21 7H33L20 20ZM5 20H20V43H5ZM20 20 33 7V22" fill="none" stroke="#333" stroke-width=".7"/><path d="M26 24H44M26 24V38H44" fill="none" stroke="#111" stroke-width="1.6"/><path d="M6 38 40 28" stroke="#5a9a4a" stroke-width=".6"/><use href="#ck"/></svg>
<svg x="1714" y="474" width="15" height="47" viewBox="0 0 15 47"><use href="#bx" y="2"/></svg>
<svg x="1558" y="527" width="46" height="36" viewBox="0 0 46 36"><use href="#bx" y="2"/><use href="#cy" y="2"/></svg>

<rect x="1550" y="564" width="178" height="7" fill="#f2f2f2"/><rect x="1550" y="564" width="178" height="1" fill="#b8b8b8"/><rect x="1550" y="570" width="178" height="1" fill="#a8a8a8"/>
<rect x="1550" y="571" width="178" height="18" fill="#e2e2e2"/><rect x="1550" y="588" width="178" height="1" fill="#a8a8a8"/>
<text x="1554" y="585" class="t13">选择</text>
<rect x="1550" y="589" width="178" height="29" fill="#f2f2f2"/>
<path d="M1559 602 1565 596V599H1571V605H1565V608Z M1593 602 1587 596V599H1581V605H1587V608Z" fill="#eee" stroke="#999"/>
<path d="M1603 603 1612 594 1621 603H1618V611H1606V603Z" fill="#fff" stroke="#111" stroke-width="1.8"/><rect x="1610" y="604" width="4" height="7" fill="#111"/>
<rect x="1626" y="593" width="102" height="22" fill="#fff"/><path d="M1626 593V614H1728" stroke="#222" fill="none"/><path d="M1626 593H1728" stroke="#bbb"/>
<text x="1630" y="610" class="t12">样式&lt;1&gt;</text>
<g fill="#fff" stroke="#a8a8a8">
<rect x="1553.500" y="621.500" width="49" height="49"/><rect x="1605.500" y="621.500" width="49" height="49"/><rect x="1657.500" y="621.500" width="49" height="49"/><rect x="1709.500" y="621.500" width="30" height="49"/>
<rect x="1553.500" y="673.500" width="49" height="49"/><rect x="1605.500" y="673.500" width="49" height="49"/><rect x="1657.500" y="673.500" width="49" height="49"/>
</g>
<g><use href="#fd" x="1553" y="631"/><use href="#fd" x="1605" y="631"/><use href="#fd" x="1657" y="631"/><use href="#fd" x="1709" y="631"/><use href="#fd" x="1553" y="683"/><use href="#fd" x="1605" y="683"/><use href="#fd" x="1657" y="683"/></g>
<svg x="1555" y="652" width="46" height="18"><text x="1" y="13" style="font-size:11px">Style Buil</text></svg>
<svg x="1609" y="652" width="43" height="18"><text x="0" y="13" class="t12">手绘边线</text></svg>
<svg x="1661" y="652" width="43" height="18"><text x="0" y="13" class="t12">混合风格</text></svg>
<svg x="1712" y="652" width="16" height="18"><text x="0" y="13" class="t12">照片</text></svg>
<svg x="1558" y="704" width="43" height="18"><text x="0" y="13" class="t12">直线</text></svg>
<svg x="1609" y="704" width="43" height="18"><text x="0" y="13" class="t12">预设风格</text></svg>
<svg x="1662" y="704" width="43" height="18"><text x="0" y="13" class="t12">颜色集</text></svg>

<!-- status bar -->
<rect x="0" y="1012" width="1728" height="28" fill="#f1f1f3"/>
<rect x="1550" y="1012" width="178" height="2" fill="#fff"/>
<text x="-16" y="1033" style="font-size:15.800px;fill:#222">选择对象。切换到扩充选择。拖动鼠标选择多项。</text>
<path d="M1567 1021V1031" stroke="#888"/>
<text x="1578" y="1033" style="font-size:15.500px;fill:#222">数值</text>
<rect x="1619.500" y="1015.500" width="110" height="22" fill="#f2f0f3" stroke="#b4bccc"/>

<!-- taskbar -->
<rect x="0" y="1040" width="1728" height="40" fill="#1c2530"/>
<rect x="248" y="1040" width="48" height="40" fill="#3f4850"/>
<rect x="153" y="1078" width="41" height="2" fill="#8fd4de"/><rect x="248" y="1078" width="48" height="2" fill="#8fd4de"/><rect x="301" y="1078" width="40" height="2" fill="#8fd4de"/>
<g transform="translate(27,1061)"><rect x="-12" y="-12" width="24" height="24" rx="8" fill="#8a8f94"/><circle r="10" fill="#f2f2f2"/><path d="M-5-5 0 1 5-5M0 1V6" stroke="#222" stroke-width="1.6" fill="none"/><path d="M0 1 5-5" stroke="#c03030" stroke-width="1.6"/></g>
<g transform="translate(76,1061)"><rect x="-9" y="-14" width="18" height="28" fill="#7d8b98"/><rect x="-9" y="-14" width="18" height="6" fill="#5bb0c8"/><path d="M-6-5H-2V-1H-6ZM0-5H4V-1H0ZM-6 1H-2V5H-6ZM0 1H4V5H0ZM-6 7H-2V11H-6ZM0 7H4V11H0Z" fill="#dde3e8"/><rect x="5" y="-5" width="3" height="16" fill="#2a4f8a"/></g>
<g transform="translate(125,1061)"><circle r="12" fill="url(#ed)"/><path d="M3 2Q8 2 12 0 11 9 3 12-2 10 3 2Z" fill="#1c2530"/><path d="M-7 7Q-8-3 1-4 7-4 7 2H-1Q-2 6 3 9-3 11-7 7Z" fill="#0c4f9e"/></g>
<g transform="translate(174,1061)"><circle r="12" fill="url(#ed)"/><path d="M3 2Q8 2 12 0 11 9 3 12-2 10 3 2Z" fill="#1c2530"/><path d="M-7 7Q-8-3 1-4 7-4 7 2H-1Q-2 6 3 9-3 11-7 7Z" fill="#0c4f9e"/></g>
<g transform="translate(222,1061)"><circle cx="-6" cy="-6" r="6" fill="#e8e4d8"/><circle cx="6" cy="-6" r="6" fill="#e8e4d8"/><circle cx="-6" cy="6" r="6" fill="#dcd8c8"/><circle cx="6" cy="6" r="6" fill="#dcd8c8"/><circle r="6" fill="#e8e8e0"/><path d="M-5 1-2-2 0 2 3-3 5 0" stroke="#4a8ab0" fill="none"/></g>
<g transform="translate(272,1061)"><path d="M-9-10 7-13 11 9-4 14-9 10Z" fill="#d82a2e"/><path d="M-3-7 4-8 4-6-1-5V-3L3-3V-1L-1 0V3" stroke="#fff" stroke-width="1.8" fill="none"/></g>
<g transform="translate(321,1061)"><rect x="-12" y="-9" width="24" height="22" fill="#1677c8"/><path d="M-3-14 12-14V-10L-3-10Z" fill="#1a90d8"/><path d="M-4-4 6 2-4 8Z" fill="#fff"/></g>
<g fill="none" stroke="#eef2f6" stroke-width="1.2">
<path d="M1529 1064 1535 1058 1541 1064"/>
<path d="M1552 1058H1555L1559 1054V1066L1555 1062H1552ZM1562 1057Q1564 1060 1562 1063M1565 1055Q1568 1060 1565 1065"/>
<rect x="1577" y="1056" width="13" height="9"/><rect x="1578.500" y="1057.500" width="4" height="6" fill="#eef2f6" stroke="none"/><path d="M1591 1059V1062"/>
<circle cx="1606" cy="1060" r="7"/><ellipse cx="1606" cy="1060" rx="3" ry="7"/><path d="M1599 1060H1613M1600 1056H1612M1600 1064H1612"/><circle cx="1611" cy="1065" r="3" fill="#1c2530"/>
<path d="M1628 1065Q1626 1060 1630 1060L1640 1052 1642 1055 1633 1064Q1630 1068 1628 1065Z"/>
</g>
<text x="1653" y="1067" style="font-size:17px;fill:#f0f4f8">中</text>
<text x="1724" y="1056" style="font-size:13px;fill:#f0f4f8">1</text>
<text x="1680" y="1075" style="font-size:13px;fill:#f0f4f8">2022年02</text>
</svg>
</body></html>
